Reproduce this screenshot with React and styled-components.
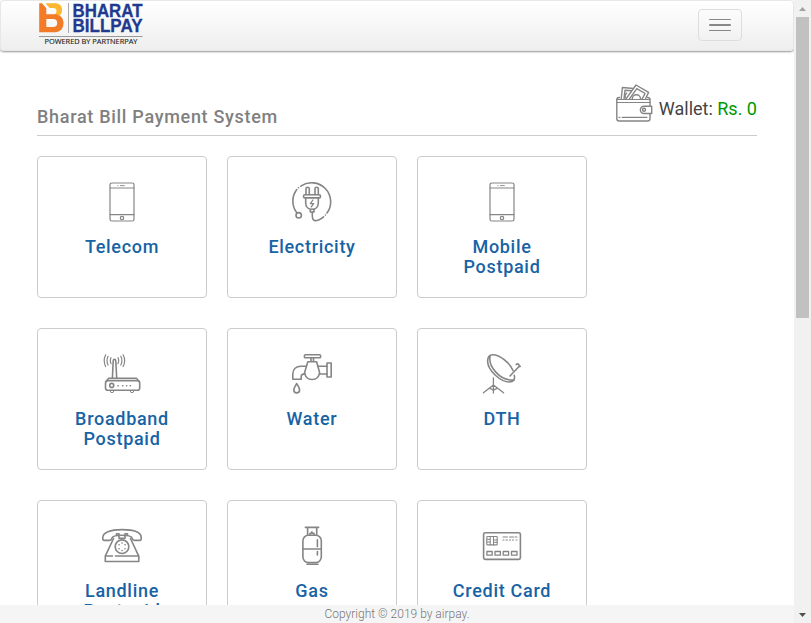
import React from 'react';
import styled, { createGlobalStyle } from 'styled-components';

const GlobalStyle = createGlobalStyle`
  *, *::before, *::after { box-sizing: border-box; }
  body {
    margin: 0;
    overflow: hidden;
    background: #fff;
    font-family: Roboto, "Liberation Sans", sans-serif;
    color: #444;
  }
`;

const Window = styled.div`
  display: flex;
  width: 100vw;
  height: 100vh;
`;

const Page = styled.div`
  flex: 1;
  min-width: 0;
  display: flex;
  flex-direction: column;
`;

const Navbar = styled.header`
  flex: none;
  display: flex;
  justify-content: space-between;
  align-items: flex-start;
  height: 51px;
  padding: 0 51px 0 37px;
  border: 1px solid #e7e7e7;
  border-radius: 4px;
  background: linear-gradient(#fff, #eee);
  box-shadow: 0 1px 2px rgba(0, 0, 0, 0.42);
`;

const MenuButton = styled.button`
  display: flex;
  flex-direction: column;
  gap: 4px;
  width: 44px;
  height: 32px;
  margin-top: 8px;
  padding: 9px 10px;
  border: 1px solid #ddd;
  border-radius: 4px;
  background: transparent;
`;

const MenuBar = styled.span`
  display: block;
  width: 22px;
  height: 2px;
  border-radius: 1px;
  background: #888;
`;

const Main = styled.main`
  flex: 1;
  min-height: 0;
  overflow: hidden;
  padding: 33px 37px 0;
`;

const Heading = styled.div`
  display: flex;
  justify-content: space-between;
  height: 52px;
  border-bottom: 1px solid #ccc;
`;

const Title = styled.h1`
  margin: 23px 0 0;
  font-size: 18px;
  line-height: 20px;
  font-weight: 500;
  letter-spacing: 0.7px;
  color: #808080;
`;

const Wallet = styled.div`
  display: flex;
  gap: 6px;
  font-size: 18px;
  line-height: 20px;
`;

const WalletText = styled.span`
  margin-top: 15px;
  white-space: nowrap;
`;

const Amount = styled.span`
  color: #090;
`;

const Services = styled.div`
  display: grid;
  grid-template-columns: repeat(3, 170px);
  grid-auto-rows: 142px;
  gap: 30px 20px;
  margin-top: 20px;
`;

const Card = styled.a`
  display: flex;
  flex-direction: column;
  align-items: center;
  padding: 25px 30px 0;
  border: 1px solid #ccc;
  border-radius: 4px;
  text-align: center;
`;

const CardLabel = styled.span`
  margin-top: 15px;
  font-size: 18px;
  line-height: 20px;
  font-weight: 500;
  letter-spacing: 0.7px;
  color: #1763a5;
`;

const Icon = styled.svg`
  flex: none;
  display: block;
  fill: none;
  stroke: #858585;
  stroke-width: ${p => p.$weight || 1.6};
  stroke-linecap: round;
  stroke-linejoin: round;
`;

const Footer = styled.footer`
  flex: none;
  height: 18px;
  background: #f5f5f5;
  color: #777;
  font-size: 12px;
  font-weight: 300;
  line-height: 18px;
  text-align: center;
`;

const Scrollbar = styled.div`
  flex: none;
  display: flex;
  flex-direction: column;
  align-items: center;
  justify-content: space-between;
  width: 17px;
  background: #f1f1f1;
`;

const ScrollTop = styled.div`
  display: flex;
  flex-direction: column;
  align-items: center;
`;

const ScrollArrow = styled.svg`
  display: block;
  width: 17px;
  height: 17px;
  fill: ${p => p.$color};
`;

const Thumb = styled.div`
  width: 13px;
  height: 301px;
  background: #c1c1c1;
`;

function Logo() {
  return (
    <svg width="110" height="48" viewBox="38 1 110 48">
      <path d="M45.5 3.2H54.5C59.5 3.2 62 5.5 62 9.8C62 12.8 60.8 15 58.5 16.5L54.5 14.5C56 13.5 56.5 12.5 56.5 11C56.5 9 55.5 8 53 8H49.5Z" fill="#fdb62f" />
      <path fillRule="evenodd" d="M39.2 3.2H42L46.3 8.2V14.2H55C60.5 14.8 63.5 18 63.5 23C63.5 29 60 32.3 53.5 32.3H39.2ZM46.3 19V27H53C56 27 57.2 25.5 57.2 23C57.2 20.3 56 19 53 19Z" fill="#f37a27" />
      <path d="M68.5 3V33" stroke="#aaa" />
      <path d="M39 36.5H142.5" stroke="#999" />
      <g fill="#213a8f" stroke="#213a8f" strokeWidth="0.3" fontFamily="Liberation Sans, sans-serif" fontWeight="700" fontSize="18">
        <text x="72.5" y="16.7" textLength="70" lengthAdjust="spacingAndGlyphs">BHARAT</text>
        <text x="72.5" y="31.9" textLength="70" lengthAdjust="spacingAndGlyphs">BILLPAY</text>
      </g>
      <text x="44.5" y="43.9" textLength="93" lengthAdjust="spacingAndGlyphs" fill="#222" stroke="#222" strokeWidth="0.15" fontFamily="Open Sans, sans-serif" fontSize="7.9">POWERED BY PARTNERPAY</text>
    </svg>
  );
}

const icons = {
  phone: (
    <>
      <rect x="8" y="1" width="24" height="38" rx="1.8" />
      <path d="M8 6H32M8 32.7H32" />
      <path d="M18.4 3.6H22.4M15.8 3.6H16" strokeWidth="0.9" />
      <circle cx="20" cy="36" r="1.7" />
    </>
  ),
  plug: (
    <>
      <path d="M4.5 30.4A19 19 0 0 1 4.8 7.6M8.8 4.2A19 19 0 0 1 35 31M31.6 34.8C29 37 26 38.6 23 38.6C20.5 38.6 20.3 36 20.3 33V30" />
      <path d="M6.5 5.8H6.6M33.4 33H33.5" />
      <circle cx="6.7" cy="33.3" r="2.7" />
      <path d="M14 12.6V6.8Q14 5.2 15.6 5.2T17.3 6.8V12.6M23 12.6V6.8Q23 5.2 24.6 5.2T26.3 6.8V12.6" />
      <rect x="11.5" y="12.7" width="17" height="3.2" rx="1.5" />
      <path d="M13.7 16V21C13.7 25 16.5 27.3 20 27.3S26.3 25 26.3 21V16M18.3 27.3V30H22V27.3" />
      <path d="M20.9 18L18.4 21.6H21.6L19.3 24.9" strokeWidth="1.3" />
    </>
  ),
  router: (
    <>
      <rect x="3.5" y="26.8" width="34.2" height="9.4" rx="2.3" />
      <path d="M3.8 27.8L6.5 24.4H34.6L37.4 27.8" />
      <path d="M10.4 24.2L11.2 7Q11.3 5.4 12.5 5.4T13.8 7L14.7 24.2" />
      <path d="M9 3.7Q7.6 6.6 9 9.6M6.1 2.3Q3.9 6.6 6.1 11M3.7 .8Q.7 6.6 3.7 12.5M16 3.7Q17.4 6.6 16 9.6M18.8 2.3Q21 6.6 18.8 11M21.1 .8Q24.2 6.6 21.1 12.5" strokeWidth="1.2" />
      <circle cx="9.7" cy="31.4" r="2" />
      <path d="M16 31.7H16.2M20.7 31.7H20.9M24.5 31.7H24.7M28.2 31.7H28.4" />
      <path d="M8 36.7L9 38.5H11L12 36.7M28 36.7L29 38.5H31L32 36.7" strokeWidth="1" />
    </>
  ),
  tap: (
    <>
      <rect x="12.3" y=".8" width="16.4" height="3" rx="1.4" />
      <path d="M19 4V7.7M21.5 4V7.7M15.8 7.8H24.6L27.6 18.5C27 23 24 25.5 20.1 25.5S13.2 23 12.6 18.5Z" />
      <path d="M14.2 12.2H9C4 12.2 .8 15 .8 20V25.3H9.2V22.5Q9.2 20 12.7 19.9M26 12.2H35M27.5 20H35" />
      <rect x="35" y="9" width="4.2" height="14" />
      <path d="M4.7 29.5C3.5 31.7 1.8 33.7 1.8 36A2.9 2.9 0 0 0 7.6 36C7.6 33.7 5.8 31.7 4.7 29.5Z" />
    </>
  ),
  dish: (
    <>
      <path d="M31 16.5C28 9.3 18 .8 10.8 .8C7.3 .8 5.6 3.2 5.6 7C5.7 17 19 28 27.5 28C31.5 28 33.2 25.5 32.3 21.3" />
      <path d="M8.2 1.5C5.5 12 18 27.2 31.8 26.1" />
      <path d="M28 22L36.8 12.8M34.2 10.5L36 9.7L38.2 12.4L36.8 12.8" />
      <path d="M11.4 23.8V39M11.4 31L1.4 38.8M11.4 31L21.6 38.8M7.4 34.2L11.4 36.2L15.5 34.2" strokeWidth="1.3" />
    </>
  ),
  telephone: (
    <>
      <path d="M.8 11.5C.8 6.5 8 3.6 20 3.6S39.2 6.5 39.2 11.5V13Q39.2 14.4 37.8 14.4H32.5Q30.7 14.4 30.2 12.4C29.7 10.2 27 9.3 20 9.3S10.3 10.2 9.8 12.4Q9.3 14.4 7.5 14.4H2.2Q.8 14.4 .8 13Z" />
      <path d="M11.5 12.5L3.5 29.7M28.5 12.5L36.5 29.7M14.5 9V7.7H17V12.2H23V7.7H25.5V9" />
      <path d="M10.5 30H3.3V35.5H36.8V30H13.5" />
      <circle cx="20" cy="20.7" r="6.8" />
      <path d="M20 17H20.1M23 18.7H23.1M23 22.7H23.1M20 24.5H20.1M17 22.7H17.1M17 18.7H17.1" />
    </>
  ),
  cylinder: (
    <>
      <path d="M13.4 1.4H26.6M15.6 1.5V9M24.7 1.5V9" />
      <path d="M18 8.7V7.3H22V8.7M19.9 7V5.8" />
      <rect x="10.9" y="9.3" width="18.4" height="27.3" rx="5.5" />
      <path d="M10.8 23H29.2M25.4 13.8V20.8M25.4 25.6V29M15 38.3H26" />
    </>
  ),
  card: (
    <>
      <rect x="1.6" y="6.8" width="36.8" height="26.6" rx="1.6" />
      <rect x="4.8" y="10.5" width="10.4" height="8.4" rx=".7" strokeWidth="1.1" />
      <path d="M8.2 10.5V19M11.5 10.5V14H15M5 13.3H8.2M5 16H8.2M11.5 19V14M11.5 16.3H15" strokeWidth="1" />
      <path d="M21 11H25.5M27.5 11H31.5M33 11H35M21 14H22M24 14H25.5M27.5 14H28.5M30.5 14H31.5M34 14H35" strokeWidth="1.1" />
      <path d="M4.9 25.5H10.2V29.2H4.9ZM13 25.5H18.4V29.2H13ZM21.2 25.5H26.6V29.2H21.2ZM29.5 25.5H35V29.2H29.5Z" strokeWidth="1.3" />
    </>
  ),
};

const services = [
  ['Telecom', 'phone', 1.2],
  ['Electricity', 'plug'],
  ['Mobile Postpaid', 'phone', 1.2],
  ['Broadband Postpaid', 'router'],
  ['Water', 'tap'],
  ['DTH', 'dish'],
  ['Landline Postpaid', 'telephone'],
  ['Gas', 'cylinder'],
  ['Credit Card', 'card'],
];

function WalletIcon() {
  return (
    <Icon width="37" height="38" viewBox="0 0 37 38" $weight={1.4}>
      <path d="M3.5 13.5H3Q.8 13.5 .8 15.7V34.5Q.8 37 3 37H31.8Q34 37 34 34.8V29.7M34 22V15.5Q34 13.5 31.5 13.5" />
      <path d="M1 15.5H34M1 18.5H34M3 33.3H4M6.2 33.3H31" strokeWidth="1.2" />
      <path d="M5.2 15L6.4 3.5L17.5 4.5M8 14.8L9 6.2L15.5 6.8M10 14.8L20 1L32.6 8.4L29.5 14.8M13.5 14.8L20.8 4.6L29.1 9.5L26.2 14.8" />
      <path d="M16.3 14.8A4.1 4.1 0 0 1 24.5 14.8M10.7 9.2Q8.5 10.5 9.2 13.8" />
      <path d="M35.7 22.2V29.5H28A3.6 3.6 0 0 1 28 22.2Z" />
      <circle cx="28" cy="25.8" r="1.5" />
    </Icon>
  );
}

export default function App() {
  return (
    <>
      <GlobalStyle />
      <Window>
        <Page>
          <Navbar>
            <Logo />
            <MenuButton aria-label="Toggle navigation">
              <MenuBar />
              <MenuBar />
              <MenuBar />
            </MenuButton>
          </Navbar>
          <Main>
            <Heading>
              <Title>Bharat Bill Payment System</Title>
              <Wallet>
                <WalletIcon />
                <WalletText>Wallet: <Amount>Rs. 0</Amount></WalletText>
              </Wallet>
            </Heading>
            <Services>
              {services.map(([label, icon, weight]) => (
                <Card key={label}>
                  <Icon width="40" height="40" viewBox="0 0 40 40" $weight={weight}>
                    {icons[icon]}
                  </Icon>
                  <CardLabel>{label}</CardLabel>
                </Card>
              ))}
            </Services>
          </Main>
          <Footer>Copyright © 2019 by airpay.</Footer>
        </Page>
        <Scrollbar>
          <ScrollTop>
            <ScrollArrow viewBox="0 0 17 17" $color="#a3a3a3"><path d="M5 11L8.5 7L12 11Z" /></ScrollArrow>
            <Thumb />
          </ScrollTop>
          <ScrollArrow viewBox="0 0 17 17" $color="#505050"><path d="M5 7L8.5 11L12 7Z" /></ScrollArrow>
        </Scrollbar>
      </Window>
    </>
  );
}
